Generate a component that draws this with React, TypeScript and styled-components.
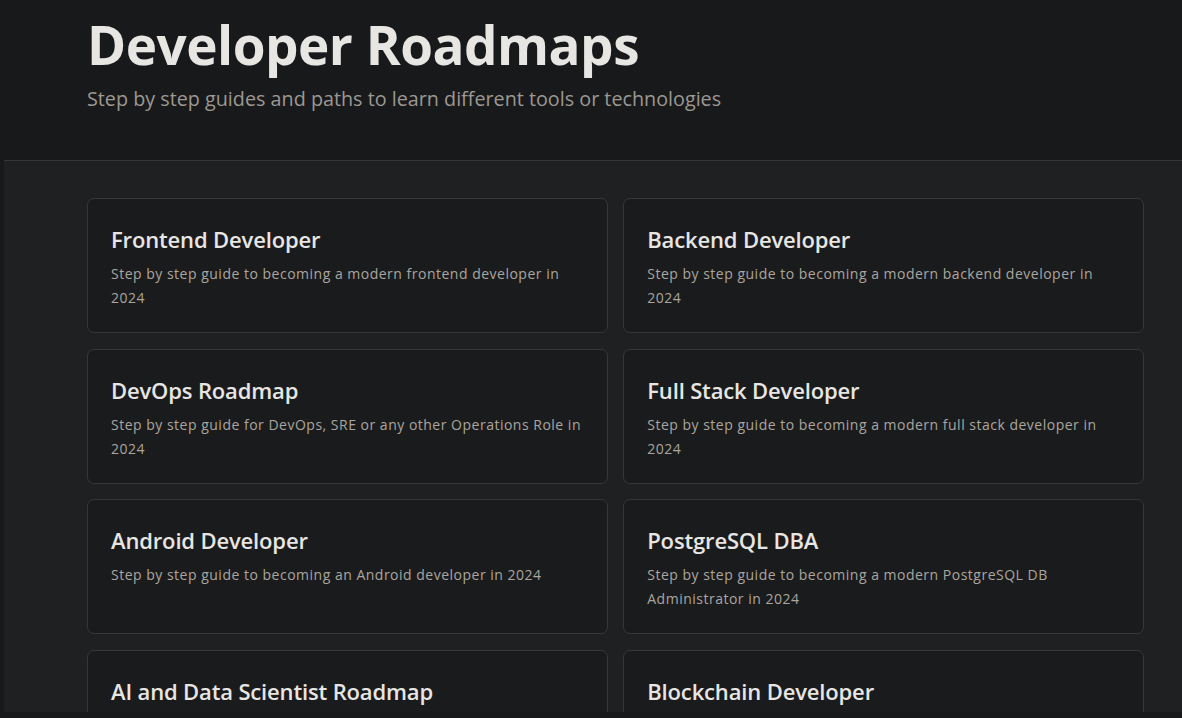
import React from "react";
import styled, { createGlobalStyle } from "styled-components";

const Global = createGlobalStyle`
  html, body { margin: 0; padding: 0; background: #18191b; overflow: hidden; }
  body { font-family: "Open Sans", "Noto Sans", sans-serif; -webkit-font-smoothing: antialiased; }
  * { box-sizing: border-box; }
`;

const Page = styled.div`
  width: 1182px;
  height: 718px;
  display: flex;
  flex-direction: column;
  background: #18191b;
`;

const Header = styled.header`
  padding: 12px 0 0 87px;
  height: 160px;
`;

const Title = styled.h1`
  margin: 0;
  font-size: 53px;
  line-height: 66px;
  font-weight: 700;
  color: #e8e6e3;
  letter-spacing: -0.5px;
`;

const Subtitle = styled.p`
  margin: 7px 0 0;
  font-size: 19.75px;
  line-height: 28px;
  color: #9c9892;
`;

const Main = styled.main`
  margin-left: 4px;
  height: 552px;
  overflow: hidden;
  background: #1f2022;
  border-top: 1px solid #34373a;
  padding: 37px 0 0 83px;
`;

const Grid = styled.div`
  width: 1057px;
  display: grid;
  grid-template-columns: 1fr 1fr;
  column-gap: 15.5px;
  row-gap: 15.5px;
`;

const Card = styled.a`
  display: flex;
  flex-direction: column;
  gap: 7px;
  min-height: 135px;
  padding: 24px 23px 20px;
  background: #1a1b1d;
  border: 1px solid #35383b;
  border-radius: 7px;
  text-decoration: none;
`;

const CardTitle = styled.h2`
  margin: 0;
  font-size: 22px;
  line-height: 32px;
  font-weight: 600;
  color: #e8e6e3;
  letter-spacing: -0.15px;
`;

const CardDesc = styled.p`
  margin: 0;
  font-size: 14px;
  line-height: 24px;
  color: #aaa69f;
  letter-spacing: 0.5px;
`;

const roadmaps = [
  ["Frontend Developer", "Step by step guide to becoming a modern frontend developer in 2024"],
  ["Backend Developer", "Step by step guide to becoming a modern backend developer in 2024"],
  ["DevOps Roadmap", "Step by step guide for DevOps, SRE or any other Operations Role in 2024"],
  ["Full Stack Developer", "Step by step guide to becoming a modern full stack developer in 2024"],
  ["Android Developer", "Step by step guide to becoming an Android developer in 2024"],
  ["PostgreSQL DBA", "Step by step guide to becoming a modern PostgreSQL DB Administrator in 2024"],
  ["AI and Data Scientist Roadmap", "Step by step guide to becoming an AI and Data Scientist in 2024"],
  ["Blockchain Developer", "Step by step guide to becoming a modern blockchain developer in 2024"],
];

export default function App() {
  return (
    <>
      <Global />
      <Page>
        <Header>
          <Title>Developer Roadmaps</Title>
          <Subtitle>Step by step guides and paths to learn different tools or technologies</Subtitle>
        </Header>
        <Main>
          <Grid>
            {roadmaps.map(([t, d]) => (
              <Card key={t} href="#">
                <CardTitle>{t}</CardTitle>
                <CardDesc>{d}</CardDesc>
              </Card>
            ))}
          </Grid>
        </Main>
      </Page>
    </>
  );
}
